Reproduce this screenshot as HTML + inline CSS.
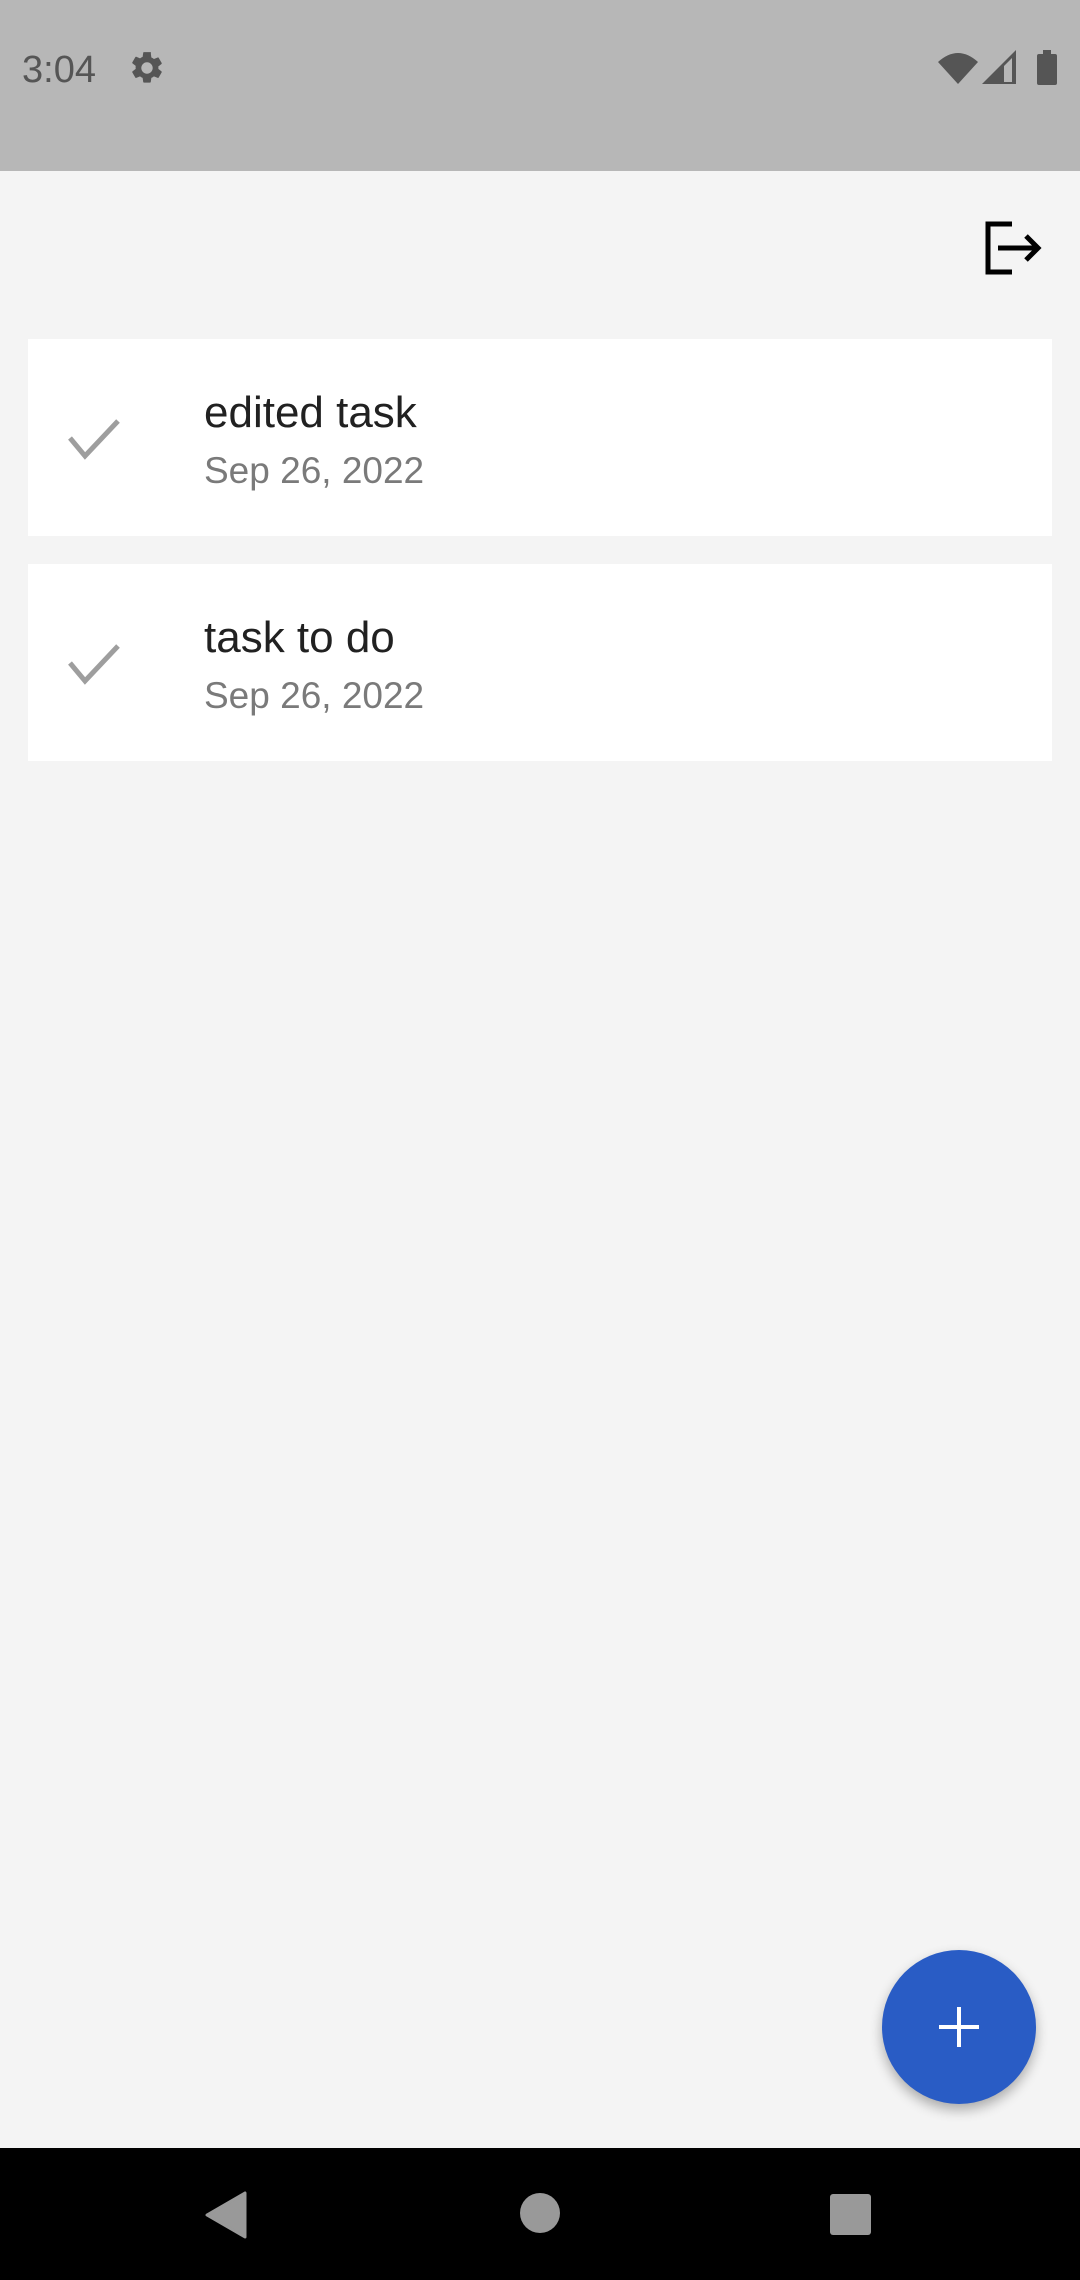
<!DOCTYPE html>
<html><head><meta charset="utf-8"><style>
body{margin:0;width:1080px;height:2280px;background:#f4f4f4;font-family:"Liberation Sans",Roboto,sans-serif;position:relative;overflow:hidden}
.sb{position:absolute;left:0;top:0;width:1080px;height:171px;background:#b7b7b7}
.card{position:absolute;left:28px;width:1024px;height:197px;background:#fff}
.t{position:absolute;left:175px;font-size:44px;color:#212121}
.d{position:absolute;left:175px;font-size:37px;color:#7a7a7a}
.nav{position:absolute;left:0;top:2148px;width:1080px;height:132px;background:#000}
</style></head><body>
<div class="sb">
<div style="position:absolute;left:22px;top:49px;font-size:38px;color:#555">3:04</div>
<svg style="position:absolute;left:128px;top:49px" width="38" height="38" viewBox="0 0 24 24"><path fill="#555" d="M19.14 12.94c.04-.3.06-.61.06-.94s-.02-.64-.07-.94l2.03-1.58a.49.49 0 0 0 .12-.61l-1.920-3.32a.49.49 0 0 0-.59-.22l-2.39.96a7 7 0 0 0-1.62-.94l-.36-2.54A.48.48 0 0 0 13.92 2h-3.84a.48.48 0 0 0-.48.41l-.36 2.54c-.59.24-1.13.56-1.62.94l-2.39-.96a.48.48 0 0 0-.59.22L2.72 8.470a.47.47 0 0 0 .12.61l2.03 1.58c-.05.3-.07.63-.07.94s.02.64.07.94l-2.03 1.58a.49.49 0 0 0-.12.61l1.92 3.32c.12.22.37.29.59.22l2.39-.96c.5.38 1.03.7 1.62.94l.36 2.54c.05.24.24.41.48.41h3.84c.24 0 .44-.17.47-.41l.36-2.54c.59-.24 1.13-.56 1.62-.94l2.39.96c.22.08.47 0 .59-.22l1.92-3.32a.47.47 0 0 0-.12-.61l-2.01-1.58zM12 15.6A3.6 3.6 0 1 1 12 8.4a3.6 3.6 0 0 1 0 7.2z"/></svg>
<svg style="position:absolute;left:936px;top:50px" width="125" height="36" viewBox="0 0 125 36"><path fill="#555" d="M2 12 Q22 -6 42 12 L22 34 Z"/><path fill="#555" d="M46 34 L80 0 L80 34 Z"/><path fill="#b7b7b7" d="M68 16 L76 8 L76 32 L68 32Z"/><rect x="101" y="4" width="20" height="31" rx="2" fill="#555"/><rect x="107" y="0" width="8" height="5" fill="#555"/></svg>
</div>
<svg style="position:absolute;left:984px;top:221px" width="60" height="54" viewBox="0 0 60 54"><path d="M28 3 H4 V51 H28" fill="none" stroke="#000" stroke-width="5"/><path d="M14 27 H54 M42 15 L54 27 L42 39" fill="none" stroke="#000" stroke-width="5"/></svg>
<div class="card" style="top:339px"></div>
<div class="card" style="top:564px"></div>
<svg style="position:absolute;left:68px;top:418px" width="52" height="42" viewBox="0 0 52 42"><path d="M2 20 L17 38 L50 3" fill="none" stroke="#9e9e9e" stroke-width="5"/></svg>
<svg style="position:absolute;left:68px;top:643px" width="52" height="42" viewBox="0 0 52 42"><path d="M2 20 L17 38 L50 3" fill="none" stroke="#9e9e9e" stroke-width="5"/></svg>
<div class="t" style="top:388px;left:204px">edited task</div>
<div class="d" style="top:450px;left:204px">Sep 26, 2022</div>
<div class="t" style="top:613px;left:204px">task to do</div>
<div class="d" style="top:675px;left:204px">Sep 26, 2022</div>
<div style="position:absolute;left:882px;top:1950px;width:154px;height:154px;border-radius:50%;background:#295cc5;box-shadow:0 6px 12px rgba(0,0,0,.3)"></div>
<div style="position:absolute;left:957px;top:2007px;width:4px;height:40px;background:#fff"></div>
<div style="position:absolute;left:939px;top:2025px;width:40px;height:4px;background:#fff"></div>
<div class="nav">
<svg style="position:absolute;left:205px;top:43px" width="42" height="48" viewBox="0 0 42 48"><path d="M40 2 L40 46 L2 24 Z" fill="#999" stroke="#999" stroke-width="3" stroke-linejoin="round"/></svg>
<div style="position:absolute;left:520px;top:45px;width:40px;height:40px;border-radius:50%;background:#999"></div>
<div style="position:absolute;left:830px;top:46px;width:41px;height:41px;border-radius:3px;background:#999"></div>
</div>
</body></html>
